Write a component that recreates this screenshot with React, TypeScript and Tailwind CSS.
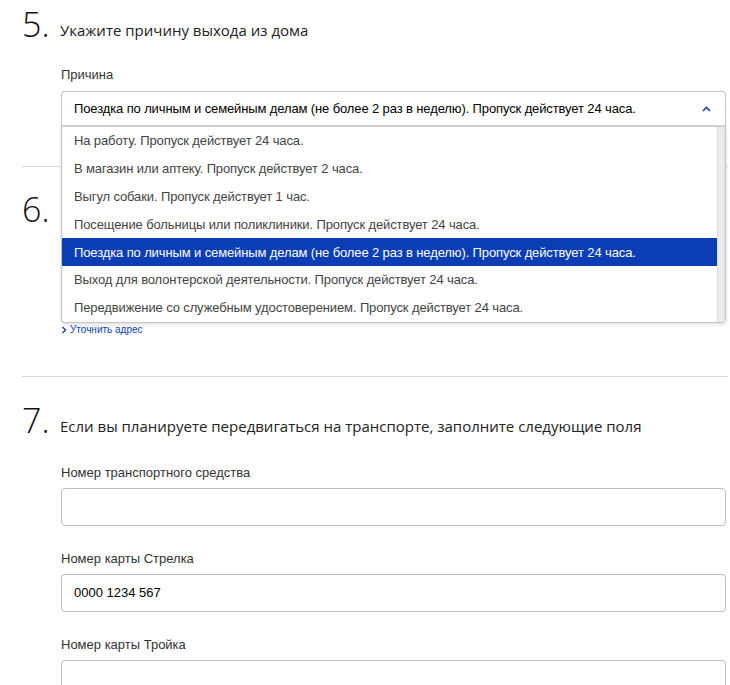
import React from "react";

const options = [
  "На работу. Пропуск действует 24 часа.",
  "В магазин или аптеку. Пропуск действует 2 часа.",
  "Выгул собаки. Пропуск действует 1 час.",
  "Посещение больницы или поликлиники. Пропуск действует 24 часа.",
  "Поездка по личным и семейным делам (не более 2 раз в неделю). Пропуск действует 24 часа.",
  "Выход для волонтерской деятельности. Пропуск действует 24 часа.",
  "Передвижение со служебным удостоверением. Пропуск действует 24 часа.",
];

function Heading({ num, text }: { num: string; text?: string }) {
  return (
    <div className="flex items-baseline">
      <span className="w-[38px] text-[34px] leading-[40px] font-light text-[#111] font-['Open_Sans',sans-serif]">
        {num}
      </span>
      {text ? (
        <span className="text-[15px] text-[#222] font-['Open_Sans',sans-serif] relative top-[-1px]">{text}</span>
      ) : null}
    </div>
  );
}

function Field({ label, value }: { label: string; value?: string }) {
  return (
    <div className="flex flex-col">
      <div className="text-[13px] leading-[18px] text-[#333]">{label}</div>
      <div className="mt-[6px] h-[38px] rounded-[4px] border border-[#bdbdbd] bg-white flex items-center px-[12px] text-[13px] text-black">
        {value}
      </div>
    </div>
  );
}

export default function App() {
  return (
    <div className="w-[730px] h-[685px] overflow-hidden bg-white font-['Liberation_Sans',Arial,sans-serif]">
      <div className="pl-[22px] pr-[2px]">
        {/* Section 5 */}
        <div className="pt-[4px]">
          <Heading num="5." text="Укажите причину выхода из дома" />
          <div className="pl-[39px] pr-[2px] mt-[22px]">
            <div className="text-[13px] leading-[18px] text-[#333]">Причина</div>
            <div className="relative mt-[7px] z-10">
              <div className="h-[36px] rounded-t-[4px] border border-[#c4c4c4] border-b-[2px] border-b-[#d0d0d0] bg-white flex items-center justify-between pl-[12px] pr-[14px]">
                <span className="text-[13px] tracking-[-0.12px] text-black">
                  Поездка по личным и семейным делам (не более 2 раз в неделю). Пропуск действует 24 часа.
                </span>
                <svg width="9" height="6" viewBox="0 0 9 6" className="mt-[1px]">
                  <path d="M1 5 L4.5 1.5 L8 5" fill="none" stroke="#1841b5" strokeWidth="1.6" />
                </svg>
              </div>
              <div className="absolute left-0 right-0 top-[36px] h-[196px] bg-white border border-t-0 border-[#c4c4c4] rounded-b-[4px] shadow-[0_2px_4px_rgba(0,0,0,0.12)] flex">
                <div className="flex-1 flex flex-col">
                  {options.map((o, i) => (
                    <div
                      key={i}
                      className={
                        i === 4
                          ? "h-[28px] flex items-center pl-[12px] text-[13px] tracking-[-0.12px] text-white bg-[#0b3eb4]"
                          : "h-[28px] flex items-center pl-[12px] text-[13px] tracking-[-0.12px] text-[#444]"
                      }
                    >
                      {o}
                    </div>
                  ))}
                </div>
                <div className="w-[8px] bg-[#ececec] border-l border-[#dcdcdc] border-r border-r-[#e2e2e2]" />
              </div>
            </div>
          </div>
          <div className="mt-[39px] border-t border-[#d9d9d9]" />
        </div>

        {/* Section 6 (mostly covered by the open list) */}
        <div className="pt-[22px]">
          <Heading num="6." />
          <div className="pl-[39px] pr-[2px]">
            <div className="mt-[22px] h-[38px] rounded-[4px] border border-[#bdbdbd] bg-white" />
            <div className="mt-[35px] flex items-center gap-[3px] text-[10px] leading-[12px] text-[#0b3eb4]">
              <svg width="6" height="8" viewBox="0 0 6 8">
                <path d="M1.5 1 L4.5 4 L1.5 7" fill="none" stroke="#0b3eb4" strokeWidth="1.4" />
              </svg>
              <span>Уточнить адрес</span>
            </div>
          </div>
          <div className="mt-[40px] border-t border-[#d9d9d9]" />
        </div>

        {/* Section 7 */}
        <div className="pt-[23px]">
          <Heading num="7." text="Если вы планируете передвигаться на транспорте, заполните следующие поля" />
          <div className="pl-[39px] pr-[2px] mt-[24px] flex flex-col gap-[24px]">
            <Field label="Номер транспортного средства" />
            <Field label="Номер карты Стрелка" value="0000 1234 567" />
            <Field label="Номер карты Тройка" />
          </div>
        </div>
      </div>
    </div>
  );
}
